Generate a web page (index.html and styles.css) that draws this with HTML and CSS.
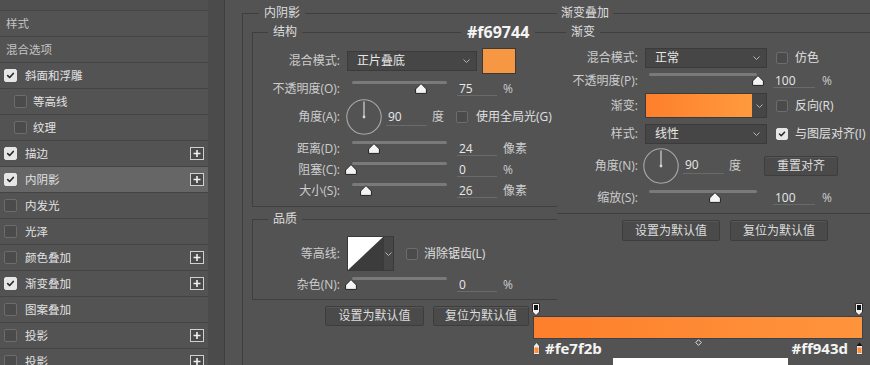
FILE: index.html
```html
<!DOCTYPE html>
<html lang="zh-CN">
<head>
<meta charset="utf-8">
<title>图层样式</title>
<link rel="stylesheet" href="styles.css">
</head>
<body>
<div class="app">
  <aside class="sidebar">
    <div class="sb-top"></div>
    <div class="sb-row head"><span>样式</span></div>
    <div class="sb-row head"><span>混合选项</span></div>
    <div class="sb-row"><span class="cb on"><svg viewBox="0 0 13 13"><path d="M3.2 6.6 L5.5 8.9 L9.8 4.1"/></svg></span><span>斜面和浮雕</span></div>
    <div class="sb-row sub"><span class="cb"></span><span>等高线</span></div>
    <div class="sb-row sub"><span class="cb"></span><span>纹理</span></div>
    <div class="sb-row"><span class="cb on"><svg viewBox="0 0 13 13"><path d="M3.2 6.6 L5.5 8.9 L9.8 4.1"/></svg></span><span>描边</span><svg class="plus" viewBox="0 0 14 13"><rect x="0.5" y="0.5" width="13" height="12"/><path d="M7 3 V10 M3.5 6.5 H10.5"/></svg></div>
    <div class="sb-row active"><span class="cb on"><svg viewBox="0 0 13 13"><path d="M3.2 6.6 L5.5 8.9 L9.8 4.1"/></svg></span><span>内阴影</span><svg class="plus" viewBox="0 0 14 13"><rect x="0.5" y="0.5" width="13" height="12"/><path d="M7 3 V10 M3.5 6.5 H10.5"/></svg></div>
    <div class="sb-row"><span class="cb"></span><span>内发光</span></div>
    <div class="sb-row"><span class="cb"></span><span>光泽</span></div>
    <div class="sb-row"><span class="cb"></span><span>颜色叠加</span><svg class="plus" viewBox="0 0 14 13"><rect x="0.5" y="0.5" width="13" height="12"/><path d="M7 3 V10 M3.5 6.5 H10.5"/></svg></div>
    <div class="sb-row"><span class="cb on"><svg viewBox="0 0 13 13"><path d="M3.2 6.6 L5.5 8.9 L9.8 4.1"/></svg></span><span>渐变叠加</span><svg class="plus" viewBox="0 0 14 13"><rect x="0.5" y="0.5" width="13" height="12"/><path d="M7 3 V10 M3.5 6.5 H10.5"/></svg></div>
    <div class="sb-row"><span class="cb"></span><span>图案叠加</span></div>
    <div class="sb-row"><span class="cb"></span><span>投影</span><svg class="plus" viewBox="0 0 14 13"><rect x="0.5" y="0.5" width="13" height="12"/><path d="M7 3 V10 M3.5 6.5 H10.5"/></svg></div>
    <div class="sb-row"><span class="cb"></span><span>投影</span><svg class="plus" viewBox="0 0 14 13"><rect x="0.5" y="0.5" width="13" height="12"/><path d="M7 3 V10 M3.5 6.5 H10.5"/></svg></div>
  </aside>
  <div class="gutter"></div>
  <main class="main">
    <section class="panel-l">
      <div class="grp outer-l">
        <span class="legend lg-outer-l">内阴影</span>
        <div class="grp struct">
          <span class="legend lg-inner">结构</span>
          <span class="legend hex">#f69744</span>
          <div class="row r-blend">
            <span class="lbl">混合模式:</span>
            <div class="select sel-l"><span>正片叠底</span><svg class="chev" viewBox="0 0 7 4"><path d="M0.5 0.5 L3.5 3.5 L6.5 0.5"/></svg></div>
            <span class="swatch"></span>
          </div>
          <div class="row srow r-opacity">
            <span class="lbl">不透明度(O):</span>
            <div class="slider"><svg class="thumb" style="left:63px" viewBox="0 0 12 11"><path d="M6 0.6 L11.4 6 V10.4 H0.6 V6 Z"/></svg></div>
            <span class="val">75</span><span class="unit">%</span>
          </div>
          <div class="row arow">
            <span class="lbl">角度(A):</span>
            <svg class="dial" viewBox="0 0 36 36"><circle cx="18" cy="18" r="17.2"/><path d="M18 2.5 V18"/><circle class="dot" cx="18" cy="18" r="1.4"/></svg>
            <span class="val ang">90</span><span class="unit du">度</span>
            <span class="cb"></span><span class="opt">使用全局光(G)</span>
          </div>
          <div class="row srow r-dist">
            <span class="lbl">距离(D):</span>
            <div class="slider"><svg class="thumb" style="left:16px" viewBox="0 0 12 11"><path d="M6 0.6 L11.4 6 V10.4 H0.6 V6 Z"/></svg></div>
            <span class="val">24</span><span class="unit">像素</span>
          </div>
          <div class="row srow">
            <span class="lbl">阻塞(C):</span>
            <div class="slider"><svg class="thumb" style="left:-7px" viewBox="0 0 12 11"><path d="M6 0.6 L11.4 6 V10.4 H0.6 V6 Z"/></svg></div>
            <span class="val">0</span><span class="unit">%</span>
          </div>
          <div class="row srow">
            <span class="lbl">大小(S):</span>
            <div class="slider"><svg class="thumb" style="left:8px" viewBox="0 0 12 11"><path d="M6 0.6 L11.4 6 V10.4 H0.6 V6 Z"/></svg></div>
            <span class="val">26</span><span class="unit">像素</span>
          </div>
        </div>
        <div class="grp quality">
          <span class="legend lg-inner">品质</span>
          <div class="row crow">
            <span class="lbl">等高线:</span>
            <div class="contour">
              <svg class="curve" viewBox="0 0 35 35" preserveAspectRatio="none"><rect width="35" height="35" fill="#3c3c3c"/><path d="M0 0 H35 L0 35 Z" fill="#ffffff"/></svg>
              <span class="c-dd"><svg class="chev" viewBox="0 0 7 4"><path d="M0.5 0.5 L3.5 3.5 L6.5 0.5"/></svg></span>
            </div>
            <span class="cb c-cb"></span><span class="opt c-opt">消除锯齿(L)</span>
          </div>
          <div class="row srow r-noise">
            <span class="lbl">杂色(N):</span>
            <div class="slider"><svg class="thumb" style="left:-7px" viewBox="0 0 12 11"><path d="M6 0.6 L11.4 6 V10.4 H0.6 V6 Z"/></svg></div>
            <span class="val">0</span><span class="unit">%</span>
          </div>
        </div>
        <div class="btns btns-l">
          <span class="btn b99">设置为默认值</span>
          <span class="btn b96">复位为默认值</span>
        </div>
      </div>
    </section>

    <section class="panel-r">
      <div class="r-body">
        <div class="grp outer-r">
          <span class="legend lg-outer-r">渐变叠加</span>
          <div class="grp grad">
            <span class="legend lg-grad">渐变</span>
            <div class="row r2-blend">
              <span class="lbl">混合模式:</span>
              <div class="select sel-r"><span>正常</span><svg class="chev" viewBox="0 0 7 4"><path d="M0.5 0.5 L3.5 3.5 L6.5 0.5"/></svg></div>
              <span class="cb r-cb"></span><span class="opt r-opt">仿色</span>
            </div>
            <div class="row srow">
              <span class="lbl">不透明度(P):</span>
              <div class="slider slider-r"><svg class="thumb" style="left:103px" viewBox="0 0 12 11"><path d="M6 0.6 L11.4 6 V10.4 H0.6 V6 Z"/></svg></div>
              <span class="val val-r">100</span><span class="unit unit-r">%</span>
            </div>
            <div class="row r2-grad">
              <span class="lbl">渐变:</span>
              <div class="gsel"><span class="g-fill"></span><span class="g-dd"><svg class="chev" viewBox="0 0 7 4"><path d="M0.5 0.5 L3.5 3.5 L6.5 0.5"/></svg></span></div>
              <span class="cb r-cb"></span><span class="opt r-opt">反向(R)</span>
            </div>
            <div class="row r2-style">
              <span class="lbl">样式:</span>
              <div class="select sel-r"><span>线性</span><svg class="chev" viewBox="0 0 7 4"><path d="M0.5 0.5 L3.5 3.5 L6.5 0.5"/></svg></div>
              <span class="cb on r-cb"><svg viewBox="0 0 13 13"><path d="M3.2 6.6 L5.5 8.9 L9.8 4.1"/></svg></span><span class="opt r-opt">与图层对齐(I)</span>
            </div>
            <div class="row r2-angle">
              <span class="lbl">角度(N):</span>
              <svg class="dial dial-r" viewBox="0 0 36 36"><circle cx="18" cy="18" r="17.2"/><path d="M18 2.5 V18"/><circle class="dot" cx="18" cy="18" r="1.4"/></svg>
              <span class="val ang val-ang-r">90</span><span class="unit du">度</span>
              <span class="btn b-reset">重置对齐</span>
            </div>
            <div class="row srow r2-scale">
              <span class="lbl">缩放(S):</span>
              <div class="slider slider-r"><svg class="thumb" style="left:60px" viewBox="0 0 12 11"><path d="M6 0.6 L11.4 6 V10.4 H0.6 V6 Z"/></svg></div>
              <span class="val val-r">100</span><span class="unit unit-r">%</span>
            </div>
          </div>
          <div class="btns btns-r">
            <span class="btn b98">设置为默认值</span>
            <span class="btn b98">复位为默认值</span>
          </div>
        </div>
      </div>
      <div class="r-blank"></div>
    </section>

    <div class="gedit">
      <div class="gstops-top">
        <svg class="stop-t" viewBox="0 0 8 13"><path d="M0.5 0.5 H7.5 V9 L4 12.5 L0.5 9 Z"/><rect x="2" y="2" width="4" height="5"/></svg>
        <svg class="stop-t" viewBox="0 0 8 13"><path d="M0.5 0.5 H7.5 V9 L4 12.5 L0.5 9 Z"/><rect x="2" y="2" width="4" height="5"/></svg>
      </div>
      <div class="gbar"></div>
      <div class="gstops-bot">
        <svg class="stop-b" viewBox="0 0 7 13"><path d="M3.5 0.5 L6.5 4 V12.5 H0.5 V4 Z"/><rect class="sw" x="1.5" y="5.5" width="4" height="5.5"/></svg>
        <span class="hexlbl hl-left">#fe7f2b</span>
        <svg class="mid" viewBox="0 0 7 7"><path d="M3.5 0.7 L6.3 3.5 L3.5 6.3 L0.7 3.5 Z"/></svg>
        <span class="hexlbl hl-right">#ff943d</span>
        <svg class="stop-b sel" viewBox="0 0 7 13"><path d="M3.5 0.5 L6.5 4 V12.5 H0.5 V4 Z"/><path class="tip" d="M3.5 0.5 L6.5 4 H0.5 Z"/><rect class="sw" x="1.5" y="5.5" width="4" height="5.5"/></svg>
      </div>
      <div class="gfoot"><span class="gfoot-white"></span></div>
    </div>
  </main>
</div>
</body>
</html>
```

FILE: styles.css
```css
* { box-sizing: border-box; }
html, body { margin: 0; padding: 0; }
body {
  width: 870px;
  height: 365px;
  overflow: hidden;
  background: #535353;
  font-family: "Open Sans", "Noto Sans CJK SC", sans-serif;
  font-size: 12px;
  color: #d2d2d2;
}
.app { display: flex; height: 365px; }

/* sidebar */
.sidebar { width: 208px; flex: none; background: #535353; }
.sb-top { height: 11px; border-bottom: 1px solid #454545; background: #505050; }
.sb-row {
  height: 26px;
  border-bottom: 1px solid #444444;
  display: flex;
  align-items: center;
  padding: 0 4px;
  font-size: 11.5px;
  line-height: 14px;
  color: #e2e2e2;
}
.sb-row.head { padding-left: 6px; color: #c4c4c4; }
.sb-row.sub { padding-left: 14px; }
.sb-row.active { background: #666666; }
.sb-row .cb { margin-right: 8px; width: 13px; height: 13px; }
.sb-row.sub .cb { margin-right: 6px; }

.cb {
  width: 12px;
  height: 12px;
  flex: none;
  border: 1px solid #6c6c6c;
  border-radius: 2px;
  background: #4b4b4b;
  display: inline-flex;
}
.cb.on { background: #e6e6e6; border-color: #e6e6e6; }
.cb svg { width: 100%; height: 100%; }
.cb svg path { fill: none; stroke: #262626; stroke-width: 1.9; stroke-linecap: round; stroke-linejoin: round; }

.plus { margin-left: auto; width: 14px; height: 13px; flex: none; }
.plus rect { fill: #4a4a4a; stroke: #d0d0d0; stroke-width: 1; }
.plus path { stroke: #f0f0f0; stroke-width: 1.6; fill: none; }

.gutter { width: 17px; flex: none; background: #4b4b4b; border-right: 1px solid #3e3e3e; }

/* main */
.main { flex: 1; position: relative; display: flex; }
.panel-l { width: 332px; flex: none; overflow: hidden; }
.panel-r { width: 313px; flex: none; display: flex; flex-direction: column; }
.r-body { height: 300px; background: #535353; overflow: hidden; }
.r-blank { flex: 1; background: #535353; }

.grp { position: relative; border: 0 solid #3f3f3f; }
.legend {
  position: absolute;
  background: #535353;
  line-height: 14px;
  padding: 0 5px;
  color: #dedede;
  white-space: nowrap;
}
.outer-l { margin: 13px 0 0 17px; border-top-width: 1px; border-left-width: 1px; min-height: 360px; }
.lg-outer-l { left: 16px; top: -8px; }
.lg-inner { left: 15px; top: -8px; }
.hex {
  left: 208px;
  top: -10px;
  padding: 0 6px;
  font-family: "Open Sans", sans-serif;
  font-weight: 700;
  font-size: 16px;
  line-height: 18px;
  color: #f4f4f4;
}
.struct { margin: 18px 0 0 9px; border-width: 1px 0 1px 1px; padding: 15px 0 5px 0; }
.quality { margin: 12px 0 0 9px; border-width: 1px 0 1px 1px; padding: 16px 0 4px 0; }

.row { display: flex; align-items: center; white-space: nowrap; }
.lbl { width: 87px; flex: none; margin-right: 7px; text-align: right; line-height: 14px; color: #cdcdcd; }
.grad .lbl { width: 81px; }

.r-blend { height: 26px; }
.select {
  height: 20px;
  background: #464646;
  border: 1px solid #3b3b3b;
  display: flex;
  align-items: center;
  padding: 0 6px 0 9px;
  color: #e6e6e6;
  line-height: 14px;
}
.sel-l { width: 130px; }
.sel-r { width: 122px; }
.chev { width: 7px; height: 4px; margin-left: auto; flex: none; }
.chev path { fill: none; stroke: #b4b4b4; stroke-width: 1; }
.swatch { width: 34px; height: 26px; margin-left: 5px; background: #f69744; border: 1px solid #3a3a3a; }

.srow { height: 21px; }
.r-opacity { margin-top: 4px; }
.r-dist { margin-top: 3px; }
.srow .lbl { line-height: 21px; }
.slider { position: relative; width: 95px; height: 21px; margin-left: 5px; flex: none; }
.slider::before {
  content: "";
  position: absolute;
  left: 0; right: 0;
  top: 3px;
  height: 3px;
  border-radius: 2px;
  background: #7a7a7a;
}
.slider-r { width: 108px; margin-left: 4px; }
.thumb { position: absolute; top: 5px; width: 12px; height: 11px; }
.thumb path { fill: #f4f4f4; stroke: #222; stroke-width: 1; }

.val {
  width: 40px;
  height: 21px;
  margin-left: 10px;
  align-self: flex-start;
  padding-left: 2px;
  line-height: 21px;
  color: #e8e8e8;
  background: linear-gradient(#6a6a6a, #6a6a6a) no-repeat 0 17px / 100% 1px;
}
.val-r { width: 42px; margin-left: 16px; }
.unit { margin-left: 6px; line-height: 14px; color: #cdcdcd; }
.unit-r { margin-left: 7px; }

.arow { height: 36px; }
.dial { width: 36px; height: 36px; margin-left: -1px; flex: none; }
.dial circle { fill: none; stroke: #a9a9a9; stroke-width: 1.1; }
.dial path { stroke: #d6d6d6; stroke-width: 1.2; }
.dial .dot { fill: #d6d6d6; stroke: none; }
.val.ang {
  width: 41px;
  margin-left: 4px;
  margin-top: 7px;
  background-position: 0 19px;
}
.du { margin-left: 5px; }
.arow .cb { margin-left: 12px; }
.opt { margin-left: 8px; line-height: 14px; color: #e0e0e0; }

.crow { height: 35px; }
.contour { display: flex; width: 47px; height: 35px; border: 1px solid #3a3a3a; flex: none; }
.curve { width: 35px; height: 33px; display: block; }
.c-dd { width: 10px; background: #474747; display: flex; align-items: center; justify-content: center; border-left: 1px solid #3a3a3a; }
.c-dd .chev { margin: 0; }
.c-cb { margin-left: 12px; }
.c-opt { margin-left: 6px; }
.r-noise { margin-top: 3px; }

.btns { display: flex; }
.btn {
  height: 20px;
  display: flex;
  align-items: center;
  justify-content: center;
  background: #4a4a4a;
  border: 1px solid #3d3d3d;
  box-shadow: inset 0 1px 0 #575757;
  border-radius: 2px;
  color: #dcdcdc;
  line-height: 14px;
  white-space: nowrap;
}
.btns-l { margin: 6px 0 0 82px; gap: 9px; }
.b99 { width: 99px; }
.b96 { width: 96px; }
.b98 { width: 98px; height: 21px; }

/* right panel */
.outer-r { margin-top: 13px; border-top-width: 1px; }
.lg-outer-r { left: 0; top: -8px; padding: 0 4px; }
.grad { margin-top: 18px; border-width: 1px 0 1px 0; padding: 13px 0 5px 0; }
.lg-grad { left: 9px; top: -8px; }
.r2-blend { height: 24px; }
.r-cb { margin-left: 9px; }
.r-opt { margin-left: 7px; }
.r2-grad { height: 25px; margin-top: 2px; }
.gsel { width: 122px; height: 25px; display: flex; border: 1px solid #3b3b3b; flex: none; }
.g-fill { flex: 1; background: linear-gradient(90deg, #fe7f2b, #ff9a3f); }
.g-dd { width: 14px; background: #464646; display: flex; align-items: center; justify-content: center; }
.g-dd .chev { margin: 0; }
.r2-style { height: 24px; margin-top: 4px; }
.r2-angle { height: 37px; margin-top: 1px; }
.dial-r { margin-left: -2px; }
.val-ang-r { width: 42px; }
.b-reset { width: 74px; margin-left: 23px; }
.r2-scale { margin-top: 3px; }
.btns-r { margin: 6px 0 0 65px; gap: 10px; }

/* gradient editor overlay */
.gedit {
  position: absolute;
  left: 305px;
  top: 300px;
  width: 333px;
  height: 65px;
  background: #535353;
}
.gstops-top { display: flex; justify-content: space-between; height: 16px; padding: 3px 0 0 2px; }
.stop-t { width: 8px; height: 13px; display: block; }
.stop-t path { fill: #f0f0f0; stroke: #2c2c2c; stroke-width: 1; }
.stop-t rect { fill: #111; }
.gbar {
  margin-left: 3px;
  height: 23px;
  border: 1px solid #3b424a;
  background: linear-gradient(90deg, #fe7f2b, #ff943d);
}
.gstops-bot { position: relative; display: flex; align-items: center; height: 19px; padding-left: 3px; }
.stop-b { width: 7px; height: 13px; flex: none; }
.stop-b path { fill: #ececec; stroke: #3a3a3a; stroke-width: 0.8; }
.stop-b .tip { fill: #111; stroke: none; }
.stop-b .sw { fill: #ff8a33; }
.hexlbl {
  font-family: "Open Sans", sans-serif;
  font-weight: 700;
  font-size: 15px;
  line-height: 17px;
  color: #f4f4f4;
}
.hl-left { margin-left: 5px; }
.hl-right { margin-left: auto; margin-right: 8px; }
.mid { position: absolute; left: 165px; top: 0; width: 7px; height: 7px; }
.mid path { fill: none; stroke: #e0e0e0; stroke-width: 1; }
.gfoot { height: 7px; padding-left: 83px; }
.gfoot-white { display: block; width: 175px; height: 7px; background: #ffffff; }
```
